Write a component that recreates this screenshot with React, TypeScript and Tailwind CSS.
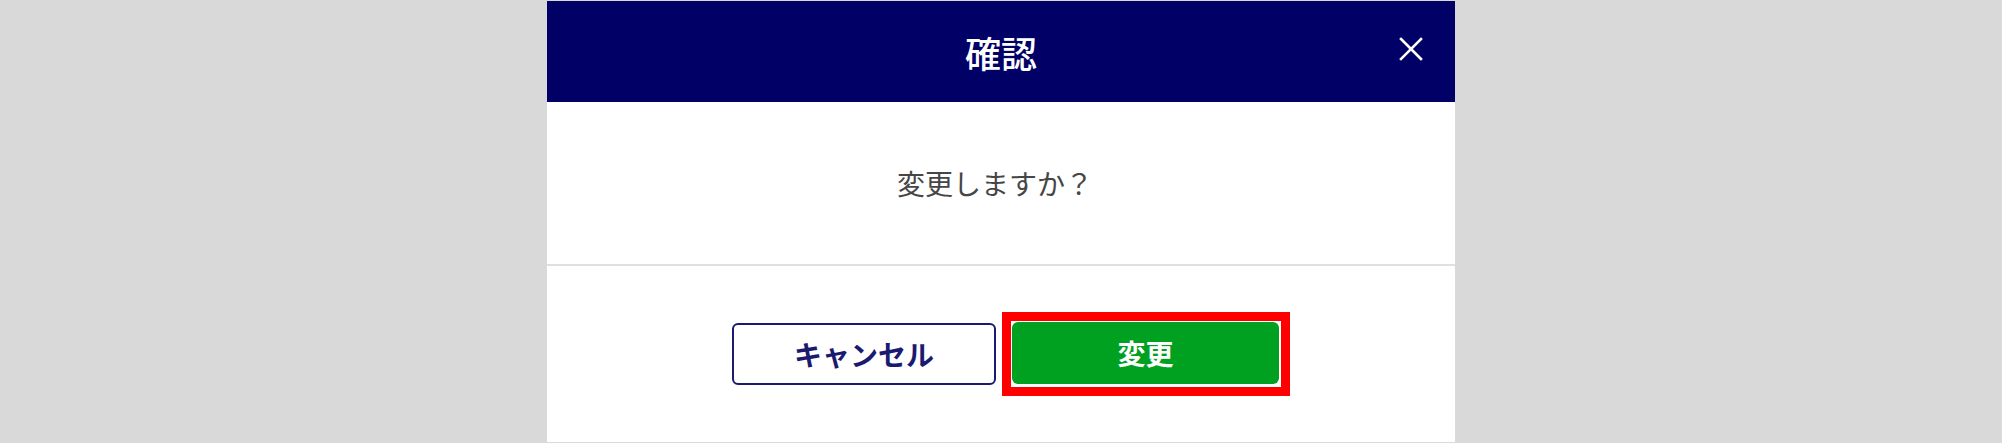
export default function App() {
  return (
    <div
      className="w-[2002px] h-[443px] bg-[#d9d9d9] flex justify-center pt-px"
      style={{ fontFamily: '"Noto Sans CJK JP", "Noto Sans", sans-serif' }}
    >
      <div className="w-[908px] h-[441px] bg-white flex flex-col">
        {/* Header */}
        <div className="relative h-[101px] shrink-0 bg-[#000066] flex items-center justify-center">
          <div className="text-white text-[36px] leading-none font-medium">確認</div>
          <button className="absolute right-[30px] top-[34px] w-[28px] h-[28px] flex items-center justify-center">
            <svg viewBox="0 0 24 24" className="w-[24px] h-[24px]" fill="none" stroke="white" strokeWidth="2.6" strokeLinecap="square">
              <path d="M2 2 L22 22 M22 2 L2 22" />
            </svg>
          </button>
        </div>

        {/* Body */}
        <div className="h-[162px] shrink-0 flex items-center justify-center pr-[12px]">
          <p className="text-[28px] leading-none text-[#464646]">変更しますか？</p>
        </div>

        <div className="h-[2px] shrink-0 bg-[#e0e0e0]" />

        {/* Footer */}
        <div className="flex-1 flex items-center justify-center gap-[6px] pl-[20px]">
          <button className="w-[264px] h-[62px] rounded-[6px] border-2 border-[#1a1a70] bg-white text-[#1a1a70] text-[28px] font-bold leading-none">
            キャンセル
          </button>
          <div className="border-[9px] border-[#ff0000] pl-px pt-px pr-[2px] pb-[3px] bg-white">
            <button className="w-[267px] h-[62px] rounded-[6px] bg-[#00a020] text-white text-[28px] font-bold leading-none">
              変更
            </button>
          </div>
        </div>
      </div>
    </div>
  );
}
